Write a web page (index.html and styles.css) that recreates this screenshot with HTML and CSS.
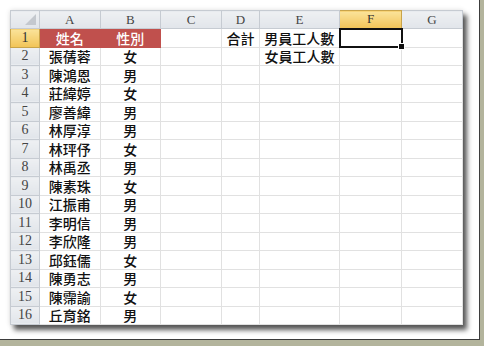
FILE: index.html
```html
<!DOCTYPE html>
<html lang="zh-Hant">
<head>
  <meta charset="UTF-8">
  <title>員工性別統計</title>
  <link rel="stylesheet" href="styles.css">
</head>
<body>

<div class="frame">
  <table class="sheet">
    <colgroup>
      <col class="w-hdr"><col class="w-a"><col class="w-b"><col class="w-c">
      <col class="w-d"><col class="w-e"><col class="w-f"><col class="w-g">
    </colgroup>
    <tr class="col-hdr">
      <th class="corner"><span class="tri"></span></th>
      <th>A</th><th>B</th><th>C</th><th>D</th><th>E</th><th class="sel">F</th><th>G</th>
    </tr>
    <tr>
      <th class="row-hdr sel">1</th>
      <td class="title">姓名</td><td class="title">性別</td><td></td>
      <td>合計</td><td>男員工人數</td><td class="active"><span class="handle"></span></td><td></td>
    </tr>
    <tr><th class="row-hdr">2</th><td>張蒨蓉</td><td>女</td><td></td><td></td><td>女員工人數</td><td></td><td></td></tr>
    <tr><th class="row-hdr">3</th><td>陳鴻恩</td><td>男</td><td></td><td></td><td></td><td></td><td></td></tr>
    <tr><th class="row-hdr">4</th><td>莊緯婷</td><td>女</td><td></td><td></td><td></td><td></td><td></td></tr>
    <tr><th class="row-hdr">5</th><td>廖善緯</td><td>男</td><td></td><td></td><td></td><td></td><td></td></tr>
    <tr><th class="row-hdr">6</th><td>林厚淳</td><td>男</td><td></td><td></td><td></td><td></td><td></td></tr>
    <tr><th class="row-hdr">7</th><td>林玶伃</td><td>女</td><td></td><td></td><td></td><td></td><td></td></tr>
    <tr><th class="row-hdr">8</th><td>林禹丞</td><td>男</td><td></td><td></td><td></td><td></td><td></td></tr>
    <tr><th class="row-hdr">9</th><td>陳素珠</td><td>女</td><td></td><td></td><td></td><td></td><td></td></tr>
    <tr><th class="row-hdr">10</th><td>江振甫</td><td>男</td><td></td><td></td><td></td><td></td><td></td></tr>
    <tr><th class="row-hdr">11</th><td>李明信</td><td>男</td><td></td><td></td><td></td><td></td><td></td></tr>
    <tr><th class="row-hdr">12</th><td>李欣隆</td><td>男</td><td></td><td></td><td></td><td></td><td></td></tr>
    <tr><th class="row-hdr">13</th><td>邱鈺儒</td><td>女</td><td></td><td></td><td></td><td></td><td></td></tr>
    <tr><th class="row-hdr">14</th><td>陳勇志</td><td>男</td><td></td><td></td><td></td><td></td><td></td></tr>
    <tr><th class="row-hdr">15</th><td>陳霈諭</td><td>女</td><td></td><td></td><td></td><td></td><td></td></tr>
    <tr><th class="row-hdr">16</th><td>丘育銘</td><td>男</td><td></td><td></td><td></td><td></td><td></td></tr>
  </table>
</div>

</body>
</html>
```

FILE: styles.css
```css
body {
  margin: 0;
  background: #b3b49c;
}

/* white picture frame */
.frame {
  width: 469px;
  height: 329px;
  padding: 10px 0 0 10px;
  background: #fff;
  border-right: 1px solid #3c3c3c;
  border-bottom: 1px solid #3c3c3c;
}

/* sheet grid */
.sheet {
  border-collapse: collapse;
  table-layout: fixed;
  width: 452px;
  background: #fff;
  box-shadow: 0 0 5px rgba(0,0,0,0.12), 4px 5px 5px rgba(0,0,0,0.65);
  font-family: "Noto Sans CJK TC", "Noto Sans CJK SC", sans-serif;
  font-size: 14px;
  font-weight: 500;
  color: #111;
}

.w-hdr { width: 29px; }
.w-a { width: 60.5px; }
.w-b { width: 60.5px; }
.w-c { width: 61px; }
.w-d { width: 38px; }
.w-e { width: 80px; }
.w-f { width: 62px; }
.w-g { width: 61px; }

.sheet tr {
  height: 18.5px;
}

.sheet td {
  padding: 0;
  border: 1px solid #e1e1e1;
  text-align: center;
  line-height: 16px;
  white-space: nowrap;
  overflow: visible;
}

/* headers */
.sheet th {
  padding: 0;
  font-family: "Liberation Serif", serif;
  font-weight: normal;
  font-size: 14px;
  color: #444;
  background: linear-gradient(#eef0f3, #e1e5ea);
  border: 1px solid #c6cbd2;
  line-height: 16px;
}

.sheet .col-hdr {
  height: 18px;
}

.col-hdr th {
  font-size: 13px;
}

.row-hdr {
  text-align: center;
}

.sheet th.sel {
  background: linear-gradient(#fbe39a, #f2c457);
  border-color: #c9a44a;
  color: #333;
}

.corner {
  position: relative;
}

.tri {
  position: absolute;
  right: 3px;
  bottom: 3px;
  width: 0;
  height: 0;
  border-left: 11px solid transparent;
  border-bottom: 11px solid #c4c8ce;
}

/* red title cells */
.sheet td.title {
  background: #c0504d;
  color: #fff;
  border-color: #c0504d;
}

/* active cell */
.sheet td.active {
  position: relative;
  border: 2px solid #111;
}

.handle {
  position: absolute;
  right: -4px;
  bottom: -4px;
  width: 5px;
  height: 5px;
  background: #111;
  border: 1px solid #fff;
}
```
